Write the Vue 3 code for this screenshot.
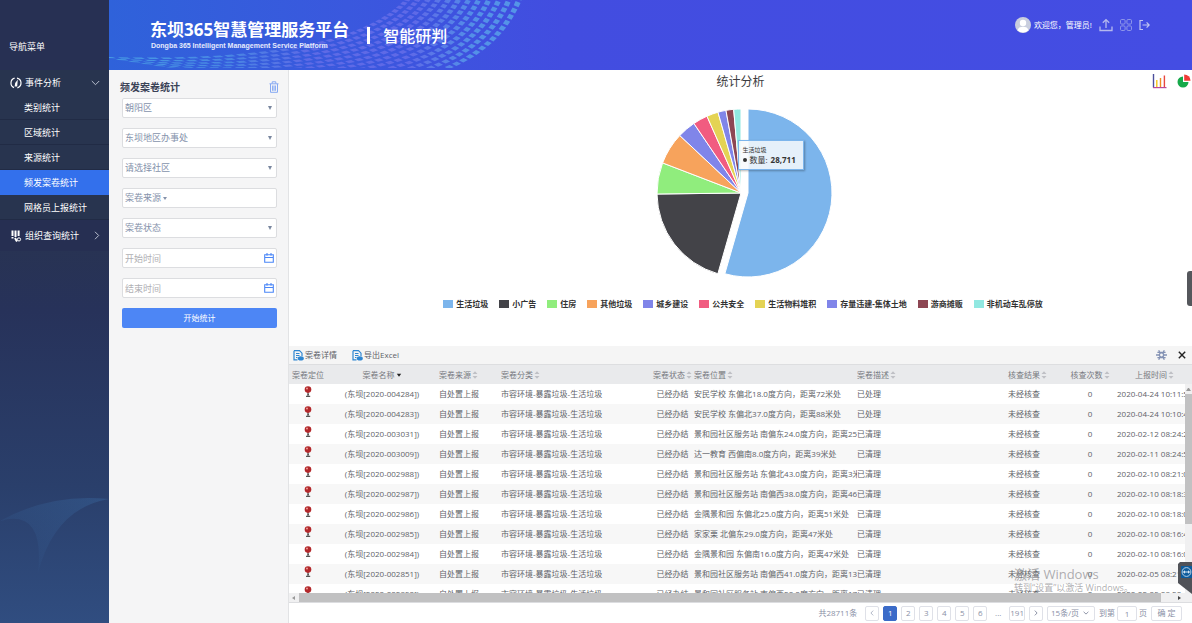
<script setup>
import { ref } from 'vue'

const subMenu = ['类别统计', '区域统计', '来源统计', '频发案卷统计', '网格员上报统计']
const activeMenu = ref('频发案卷统计')

const colors = {
  blue: '#7cb5ec', black: '#434348', green: '#90ed7d', orange: '#f7a35c', violet: '#8085e9',
  pink: '#f15c80', yellow: '#e4d354', maroon: '#8d4653', teal: '#91e8e1'
}
const series = [
  { name: '生活垃圾', color: colors.blue, from: 0, to: 196 },
  { name: '小广告', color: colors.black, from: 196, to: 269.3 },
  { name: '住房', color: colors.green, from: 269.3, to: 291 },
  { name: '其他垃圾', color: colors.orange, from: 291, to: 313.2 },
  { name: '城乡建设', color: colors.violet, from: 313.2, to: 325.9 },
  { name: '公共安全', color: colors.pink, from: 325.9, to: 336.1 },
  { name: '生活物料堆积', color: colors.yellow, from: 336.1, to: 344.1 },
  { name: '存量违建-集体土地', color: colors.violet, from: 344.1, to: 349.7 },
  { name: '游商摊贩', color: colors.maroon, from: 349.7, to: 355 },
  { name: '非机动车乱停放', color: colors.teal, from: 355, to: 360 }
]
function slice(s, i) {
  const r = 84
  const cx = i === 0 ? 94 : 87
  const cy = 86
  const pt = (a) => {
    const t = (a * Math.PI) / 180
    return `${(cx + r * Math.sin(t)).toFixed(2)} ${(cy - r * Math.cos(t)).toFixed(2)}`
  }
  return `M${cx} ${cy}L${pt(s.from)}A${r} ${r} 0 ${s.to - s.from > 180 ? 1 : 0} 1 ${pt(s.to)}Z`
}

// Folded sheet of small tiles behind the header title.
function sheet(u, v) {
  const a = (1 - u) * (1 - u)
  const b = 2 * u * (1 - u)
  const c = u * u
  const x = a * (-6 + 150 * v) + b * (250 + 130 * v) + c * (302 + 118 * v)
  const y = a * (57 + 24 * v) + b * (64 + 50 * v) + c * -8
  return `${x.toFixed(1)} ${y.toFixed(1)}`
}
function buildTiles() {
  const nu = 34
  const nv = 12
  let d = ''
  for (let i = 0; i < nu; i++) {
    for (let j = 0; j < nv; j++) {
      const u = i / nu
      const v = j / nv
      const w = 0.66 / nu
      const h = 0.56 / nv
      const k = 0.25 / nu
      d += `M${sheet(u, v)}L${sheet(u + w, v)}L${sheet(u + w - k, v + h)}L${sheet(u - k, v + h)}Z`
    }
  }
  return d
}
const tiles = buildTiles()

const columns = [
  { title: '案卷定位', cls: 'c-pin' },
  { title: '案卷名称', cls: 'c-name', sort: 'down' },
  { title: '案卷来源', cls: 'c-src', sort: 'both' },
  { title: '案卷分类', cls: 'c-type', sort: 'both' },
  { title: '案卷状态', cls: 'c-state', sort: 'both' },
  { title: '案卷位置', cls: 'c-loc', sort: 'both' },
  { title: '案卷描述', cls: 'c-desc', sort: 'both' },
  { title: '核查结果', cls: 'c-res', sort: 'both' },
  { title: '核查次数', cls: 'c-count', sort: 'both' },
  { title: '上报时间', cls: 'c-time', sort: 'both' }
]
const rows = [
  ['004284', '安民学校 东偏北18.0度方向，距离72米处', '已处理', '2020-04-24 10:11:5'],
  ['004283', '安民学校 东偏北37.0度方向，距离88米处', '已处理', '2020-04-24 10:10:4'],
  ['003031', '景和园社区服务站 南偏东24.0度方向，距离25', '已清理', '2020-02-12 08:24:2'],
  ['003009', '达一教育 西偏南8.0度方向，距离39米处', '已清理', '2020-02-11 08:24:5'],
  ['002988', '景和园社区服务站 东偏北43.0度方向，距离3米', '已清理', '2020-02-10 08:21:0'],
  ['002987', '景和园社区服务站 南偏西38.0度方向，距离46', '已清理', '2020-02-10 08:18:3'],
  ['002986', '金隅景和园 东偏北25.0度方向，距离51米处', '已清理', '2020-02-10 08:18:0'],
  ['002985', '家家栗 北偏东29.0度方向，距离47米处', '已清理', '2020-02-10 08:16:4'],
  ['002984', '金隅景和园 东偏南16.0度方向，距离47米处', '已清理', '2020-02-10 08:16:0'],
  ['002851', '景和园社区服务站 南偏西41.0度方向，距离13', '已清理', '2020-02-05 08:21:0'],
  ['002850', '景和园社区服务站 南偏西20.0度方向，距离17', '已清理', '2020-02-05 08:20:4']
]
const pages = [1, 2, 3, 4, 5, 6]
const page = ref(1)
const jump = ref('1')
const start = ref('')
const end = ref('')
</script>

<template>
  <div class="app">
    <aside class="side">
      <div class="side-title">导航菜单</div>
      <nav>
        <button class="group first">
          <svg width="12" height="12" viewBox="0 0 12 12"><g fill="none" stroke="#fff" stroke-width="1.2"><path d="M4.6 1.2A5 5 0 0 0 4 10.6M7 1.1A5 5 0 0 1 7.4 10.8" /></g><path d="M7.8 2.4L7.2 9.4H4.6L5.2 6Z" fill="#fff" /></svg>
          <span>事件分析</span>
          <svg class="chev" width="9" height="6" viewBox="0 0 9 6"><path d="M.8 1L4.5 4.7L8.2 1" fill="none" stroke="#b9bfce" /></svg>
        </button>
        <a v-for="m in subMenu" :key="m" href="#" class="sub" :class="{ on: m === activeMenu }" @click.prevent="activeMenu = m">{{ m }}</a>
        <button class="group last">
          <svg width="12" height="12" viewBox="0 0 12 12"><path d="M2.5 .5V6M5.5 .5V7M8.6 .5V6M2.5 7V8.5M5 8L7 11.5" stroke="#fff" stroke-width="2" fill="none" /><circle cx="9" cy="9.4" r="1.6" fill="none" stroke="#fff" /></svg>
          <span>组织查询统计</span>
          <svg class="chev" width="6" height="9" viewBox="0 0 6 9"><path d="M1 .8L4.7 4.5L1 8.2" fill="none" stroke="#b9bfce" /></svg>
        </button>
      </nav>
      <svg class="glow" viewBox="0 0 109 160" preserveAspectRatio="none">
        <defs><linearGradient id="gl" x1="0" y1="1" x2="1" y2="0"><stop offset="0" stop-color="#3f78b4" stop-opacity="0" /><stop offset="1" stop-color="#3f78b4" stop-opacity=".3" /></linearGradient></defs>
        <path d="M0 58Q50 30 109 36Q55 45 38 110Q45 45 0 58Z" fill="url(#gl)" />
      </svg>
    </aside>

    <div class="body">
      <header class="top">
        <svg class="wave" width="430" height="68" viewBox="0 0 430 68">
          <defs><linearGradient id="wv" gradientUnits="userSpaceOnUse" x1="0" y1="0" x2="420" y2="60">
            <stop offset="0" stop-color="#4fb4e8" /><stop offset=".3" stop-color="#4f94e6" /><stop offset=".48" stop-color="#6a70e8" /><stop offset=".72" stop-color="#6a70ea" /><stop offset=".86" stop-color="#5aa4ea" /><stop offset="1" stop-color="#5cb0ea" />
          </linearGradient></defs>
          <path :d="tiles" fill="url(#wv)" opacity=".75" />
        </svg>
        <div class="brand">
          <h1>东坝365智慧管理服务平台</h1>
          <p>Dongba 365 Intelligent Management Service Platform</p>
        </div>
        <i class="bar"></i>
        <h2>智能研判</h2>
        <div class="user">
          <svg width="16" height="16" viewBox="0 0 16 16"><circle cx="8" cy="8" r="8" fill="#c9cede" /><circle cx="8" cy="6" r="3.2" fill="#fff" /><path d="M2.5 13.2Q3.5 9.8 8 9.8T13.5 13.2A8 8 0 0 1 2.5 13.2Z" fill="#fff" /></svg>
          <span>欢迎您，管理员!</span>
          <button aria-label="上传"><svg width="14" height="14" viewBox="0 0 14 14"><path d="M1 8.5V12.5H13V8.5M7 10V2M3.8 4.8L7 1.6L10.2 4.8" fill="none" stroke="#b4b8ee" stroke-width="1.3" /></svg></button>
          <button aria-label="应用"><svg width="12" height="12" viewBox="0 0 12 12"><g fill="none" stroke="#8f97ea"><rect x=".5" y=".5" width="4.6" height="4.6" rx="1.2" /><rect x="6.9" y=".5" width="4.6" height="4.6" rx="1.2" /><rect x=".5" y="6.9" width="4.6" height="4.6" rx="1.2" /><rect x="6.9" y="6.9" width="4.6" height="4.6" rx="1.2" /></g></svg></button>
          <button aria-label="退出"><svg width="11" height="12" viewBox="0 0 11 12"><path d="M4 1.5H1V10.5H4M3.5 6H10M7.6 3.4L10.2 6L7.6 8.6" fill="none" stroke="#c0c4f2" stroke-width="1.2" /></svg></button>
        </div>
      </header>

      <div class="work">
        <form class="filter" @submit.prevent>
          <div class="filter-head">
            <h3>频发案卷统计</h3>
            <button type="button" aria-label="清空"><svg width="10" height="12" viewBox="0 0 10 12"><path d="M.5 2.8H9.5M3.2 2.5V.8H6.8V2.5M1.5 3V11.3H8.5V3M3.6 4.5V9.8M5 4.5V9.8M6.4 4.5V9.8" fill="none" stroke="#86a9f3" /></svg></button>
          </div>
          <div class="field arrow"><select aria-label="区"><option>朝阳区</option></select></div>
          <div class="field arrow"><select aria-label="街道"><option>东坝地区办事处</option></select></div>
          <div class="field arrow"><select aria-label="社区"><option>请选择社区</option></select></div>
          <div class="field"><button type="button" class="drop">案卷来源<i></i></button></div>
          <div class="field arrow"><select aria-label="状态"><option>案卷状态</option></select></div>
          <div class="field date"><input v-model="start" aria-label="开始时间" placeholder="开始时间" /><svg width="10" height="10" viewBox="0 0 10 10"><path d="M.7 1.8H9.3V9.3H.7ZM.7 4.5H9.3M3 0V2.8M7 0V2.8" fill="none" stroke="#4a86f7" stroke-width="1.1" /></svg></div>
          <div class="field date"><input v-model="end" aria-label="结束时间" placeholder="结束时间" /><svg width="10" height="10" viewBox="0 0 10 10"><path d="M.7 1.8H9.3V9.3H.7ZM.7 4.5H9.3M3 0V2.8M7 0V2.8" fill="none" stroke="#4a86f7" stroke-width="1.1" /></svg></div>
          <button class="go">开始统计</button>
        </form>

        <main class="main">
          <section class="chart">
            <h3>统计分析</h3>
            <div class="switch">
              <button aria-label="柱状图"><svg width="15" height="16" viewBox="0 0 15 16"><path d="M1.5 1V14.5" stroke="#4c4f9c" stroke-width="1.4" /><path d="M1 14.6H14.5" stroke="#b94a9c" stroke-width="1.2" /><path d="M4.8 7V14" stroke="#f5c518" stroke-width="1.4" /><path d="M8.5 5V14" stroke="#f08a24" stroke-width="1.4" /><path d="M12.4 2.5V14" stroke="#e8473f" stroke-width="1.4" /></svg></button>
              <button aria-label="饼图"><svg width="14" height="14" viewBox="0 0 14 14"><path d="M6 2.5A5.5 5.5 0 1 0 11.5 8H6Z" fill="#17a94a" /><path d="M7.2 .4A6.4 6.4 0 0 1 13.6 6.8H7.2Z" fill="#f03b36" /></svg></button>
            </div>
            <div class="pie">
              <svg width="180" height="172" viewBox="0 0 180 172"><path v-for="(s, i) in series" :key="i" :d="slice(s, i)" :fill="s.color" stroke="#fff" stroke-width="1" stroke-linejoin="round" /></svg>
              <div class="tip">
                <div class="tip-name">生活垃圾</div>
                <div class="tip-val"><i></i>数量: <b>28,711</b></div>
              </div>
            </div>
            <ul class="legend">
              <li v-for="(s, i) in series" :key="i"><svg width="10" height="8"><rect width="10" height="8" :fill="s.color" /></svg>{{ s.name }}</li>
            </ul>
          </section>

          <section class="list">
            <div class="tools">
              <button v-for="t in ['案卷详情', '导出Excel']" :key="t">
                <svg width="11" height="11" viewBox="0 0 11 11"><path d="M1 .7H6.5L9 3.2V6M1 .7V9.8H4.5M3 3.5H6.5M3 5.5H6.5M3 7.5H4.5" fill="none" stroke="#2e86d1" stroke-width="1.2" /><ellipse cx="7.8" cy="8.4" rx="3" ry="2.1" fill="#2e86d1" /></svg>{{ t }}
              </button>
              <span class="grow"></span>
              <button aria-label="设置"><svg width="11" height="10" viewBox="0 0 11 10"><path d="M2.7 .3L4.4 3.5M8.3 .3L6.6 3.5M2.7 9.7L4.4 6.5M8.3 9.7L6.6 6.5M0 5H3.5M7.5 5H11M1.4 2.4H9.6M1.4 7.6H9.6" stroke="#8492b4" stroke-width="1.3" /><circle cx="5.5" cy="5" r="2.1" fill="#f5f5f5" stroke="#8492b4" stroke-width="1.3" /></svg></button>
              <button class="close" aria-label="关闭"><svg width="8" height="8" viewBox="0 0 8 8"><path d="M.8 .8L7.2 7.2M7.2 .8L.8 7.2" stroke="#222" stroke-width="1.4" /></svg></button>
            </div>
            <div class="grid">
              <table>
                <thead>
                  <tr>
                    <th v-for="c in columns" :key="c.title" :class="c.cls">{{ c.title }}<svg v-if="c.sort === 'both'" width="6" height="8" viewBox="0 0 6 8"><path d="M.5 3L3 .3L5.5 3ZM.5 5L3 7.7L5.5 5Z" fill="#bfc0c5" /></svg><svg v-else-if="c.sort" width="6" height="8" viewBox="0 0 6 8"><path d="M.8 2.8H5.2L3 5.8Z" fill="#222" /></svg></th>
                  </tr>
                </thead>
                <tbody>
                  <tr v-for="r in rows" :key="r[0]">
                    <td class="c-pin"><svg width="8" height="12" viewBox="0 0 8 12"><path d="M4 6V10M2 10.4H6.2M3.2 8.3H5" stroke="#555" stroke-width="1.2" /><circle cx="4" cy="3.6" r="3.3" fill="#b3282b" /><circle cx="3" cy="2.6" r="1" fill="#eb9b96" /></svg></td>
                    <td class="c-name">(东坝[2020-{{ r[0] }}])</td>
                    <td class="c-src">自处置上报</td>
                    <td class="c-type">市容环境-暴露垃圾-生活垃圾</td>
                    <td class="c-state">已经办结</td>
                    <td class="c-loc">{{ r[1] }}</td>
                    <td class="c-desc">{{ r[2] }}</td>
                    <td class="c-res">未经核查</td>
                    <td class="c-count">0</td>
                    <td class="c-time">{{ r[3] }}</td>
                  </tr>
                </tbody>
              </table>
              <div class="vbar"><i></i><span></span></div>
            </div>
            <div class="hbar"><i class="l"></i><span></span><i class="r"></i></div>
            <div class="pager">
              <span class="total">共28711条</span>
              <button aria-label="上一页"><svg width="4" height="6" viewBox="0 0 4 6"><path d="M3.2 .6L.9 3L3.2 5.4" fill="none" stroke="#b3b8c8" /></svg></button>
              <button v-for="p in pages" :key="p" :class="{ on: p === page }" @click="page = p">{{ p }}</button>
              <span class="dots">...</span>
              <button>191</button>
              <button aria-label="下一页"><svg width="4" height="6" viewBox="0 0 4 6"><path d="M.8 .6L3.1 3L.8 5.4" fill="none" stroke="#8f95a8" /></svg></button>
              <div class="size"><select aria-label="每页条数"><option>15条/页</option></select><svg width="6" height="4" viewBox="0 0 6 4"><path d="M.6 .8L3 3.1L5.4 .8" fill="none" stroke="#8f95a8" /></svg></div>
              <label for="jump">到第</label><input id="jump" v-model="jump" /><span>页</span>
              <button class="ok">确 定</button>
            </div>
            <div class="mark"><p>激活 Windows</p><p class="small">转到“设置”以激活 Windows。</p></div>
          </section>
        </main>
      </div>
    </div>
    <div class="handle"></div>
    <div class="remote"><svg width="11" height="12" viewBox="0 0 11 12"><rect width="11" height="12" fill="#0d5b9c" /><circle cx="5.5" cy="6" r="4.4" fill="none" stroke="#b9d2e6" /><path d="M1.8 6L4 4.2V5.4H7V4.2L9.2 6L7 7.8V6.6H4V7.8Z" fill="#d8e6f2" /></svg></div>
  </div>
</template>

<style>
body { margin: 0; overflow: hidden; }
</style>

<style scoped>
* { box-sizing: border-box; }
.app {
  position: relative; display: flex; height: 100vh; overflow: hidden;
  font-family: "Open Sans", "Noto Sans CJK SC", sans-serif; font-size: 8px; line-height: 12px; color: #606268;
}
button, input, select { font: inherit; color: inherit; margin: 0; padding: 0; border: 0; background: none; }
h1, h2, h3, p, ul { margin: 0; padding: 0; list-style: none; }
svg { display: block; flex: none; }

.side {
  position: relative; flex: 0 0 109px; color: #fff; font-size: 9px;
  background: linear-gradient(180deg, #273152 0, #283352 38%, #27325a 50%, #2a3f6b 78%, #304d80 100%);
}
.side-title { height: 70px; padding: 41px 0 0 9px; background: #273053; }
.group { display: flex; align-items: center; width: 100%; height: 25px; padding: 0 9px 0 10px; gap: 3px; text-align: left; background: #28344f; }
.group span { flex: 1; }
.group.last { height: 31px; background: #262f52; }
.sub { display: block; height: 25px; padding: 6px 0 0 24px; line-height: 14px; color: #fff; text-decoration: none; background: #28344f; border-bottom: 1px solid #212b45; }
.sub.on { background: #3370ec; border-color: #3370ec; }
.glow { position: absolute; left: 0; bottom: 0; width: 100%; height: 160px; }

.body { flex: 1; min-width: 0; display: flex; flex-direction: column; }
.top {
  position: relative; flex: 0 0 70px; display: flex; align-items: flex-start; color: #fff; padding-left: 41px;
  background: linear-gradient(90deg, #2f62da 0, #3a58de 22%, #424de0 42%, #444de3 100%);
}
.wave { position: absolute; left: 0; top: 0; }
.brand, .bar, h2, .user { position: relative; }
.brand { padding-top: 18px; }
h1 { font-size: 17px; line-height: 23px; font-weight: 700; white-space: nowrap; }
.brand p { font: 700 7px/9px "Liberation Sans", Arial, sans-serif; padding-left: 1px; color: #e6eafc; white-space: nowrap; }
.bar { width: 3px; height: 17px; margin: 27px 13px 0 18px; background: #fff; }
h2 { padding-top: 24px; font-size: 16px; line-height: 24px; font-weight: 500; white-space: nowrap; }
.user { display: flex; align-items: center; gap: 7px; margin: 16px 42px 0 auto; height: 17px; }
.user span { margin-left: -4px; white-space: nowrap; }

.work { flex: 1; min-height: 0; display: flex; }
.filter { flex: 0 0 180px; padding: 8px 11px 0 13px; display: flex; flex-direction: column; gap: 10px; background: #f5f5f6; border-right: 1px solid #e2e3e5; font-size: 9px; color: #8592ab; }
.filter-head { display: flex; justify-content: space-between; align-items: center; height: 17px; margin: 0 -2px -7px -2px; }
.filter-head h3 { font-size: 10px; font-weight: 700; color: #3a4256; }
.field { position: relative; height: 20px; background: #fff; border: 1px solid #dcdde0; border-radius: 2px; display: flex; align-items: center; }
.field select, .field input { appearance: none; width: 100%; height: 18px; padding: 0 2px; outline: 0; }
.field.arrow::after { content: ""; position: absolute; right: 4px; top: 7px; border: 2px solid transparent; border-top: 4px solid #7a879f; border-bottom: 0; }
.drop { display: flex; align-items: center; gap: 2px; padding: 0 2px; }
.drop i { border: 2px solid transparent; border-top: 3px solid #8592ab; border-bottom: 0; }
.date svg { margin-right: 2px; }
.field input::placeholder { color: #b0b0b4; opacity: 1; }
.go { height: 20px; border-radius: 2px; background: #4d86f5; color: #fff; font-size: 8px; }

.main { flex: 1; min-width: 0; display: flex; flex-direction: column; background: #fff; }
.chart { position: relative; flex: 0 0 276px; display: flex; flex-direction: column; align-items: center; }
.chart h3 { margin-top: 3px; font-size: 12px; line-height: 18px; font-weight: 400; color: #3c3c40; }
.switch { position: absolute; right: 1px; top: 3px; display: flex; align-items: center; gap: 10px; }
.pie { position: relative; margin: 16px 0 0 6px; }
.tip { position: absolute; left: 84px; top: 33px; width: 66px; height: 30px; padding: 5px 0 0 4px; color: #333; background: rgba(247, 249, 251, .86); border: 1px solid #7cb5ec; box-shadow: 1px 1px 2px rgba(0, 0, 0, .3); white-space: nowrap; }
.tip-name { font-size: 6px; line-height: 9px; }
.tip-val { display: flex; align-items: center; gap: 3px; line-height: 10px; }
.tip-val i { width: 4px; height: 4px; border-radius: 50%; background: #333; }
.legend { display: flex; gap: 11px; margin: 19px 0 0 5px; }
.legend li { display: flex; align-items: center; gap: 3px; font-weight: 700; color: #333; white-space: nowrap; line-height: 12px; }

.list { position: relative; flex: 1; min-height: 0; display: flex; flex-direction: column; }
.tools { flex: 0 0 19px; display: flex; align-items: center; gap: 15px; padding: 0 6px 0 4px; background: #f5f5f5; border-bottom: 1px solid #dddee0; }
.tools button { display: flex; align-items: center; gap: 1px; }
.tools .close { margin-left: -4px; }
.grow { flex: 1; }
.grid { position: relative; flex: 1; min-height: 0; overflow: hidden; }
table { width: 100%; table-layout: fixed; border-collapse: collapse; }
th { height: 19px; background: #e9eaec; font-weight: 400; color: #77797f; }
td { height: 20px; }
th, td { padding: 0 0 0 2px; line-height: 14px; text-align: left; white-space: nowrap; overflow: hidden; }
th svg { display: inline-block; vertical-align: middle; margin-left: 1px; }
tbody tr:nth-child(even) { background: #f7f7f7; }
.c-pin { width: 36px; text-align: center; }
td.c-pin { vertical-align: top; }
td.c-pin svg { margin: 2px auto 0; }
.c-name { width: 112px; text-align: center; }
.c-src { width: 62px; }
.c-type { width: 152px; }
.c-state { width: 43px; text-align: center; padding: 0; }
.c-loc { width: 163px; padding: 0; }
.c-desc { padding: 0; }
.c-res { width: 56px; }
.c-count { width: 54px; text-align: center; }
.c-time { width: 76px; padding-left: 1px; }
th.c-time { text-align: center; }
.vbar { position: absolute; right: 0; top: 19px; bottom: 0; width: 7px; background: #f0f0f1; }
.vbar i { display: block; margin: 4px 1px 3px 1px; border: 2px solid transparent; border-bottom: 3px solid #999; border-top: 0; }
.vbar span { display: block; height: 130px; background: #c1c1c2; }
.hbar { flex: 0 0 10px; display: flex; align-items: center; background: #f0f0f1; border-bottom: 1px solid #dcdde0; }
.hbar span { flex: 1; height: 9px; background: #c1c1c2; }
.hbar i { border: 2px solid transparent; }
.hbar .l { border-right: 3px solid #999; border-left: 0; margin: 0 4px 0 3px; }
.hbar .r { border-left: 3px solid #444; border-right: 0; margin: 0 11px 0 17px; }
.pager { flex: 0 0 20px; display: flex; align-items: center; justify-content: flex-end; gap: 4px; padding-right: 10px; color: #8a90a6; white-space: nowrap; }
.pager button, .pager input, .size { min-width: 14px; height: 15px; display: flex; align-items: center; justify-content: center; background: #fff; border: 1px solid #dfe1e8; border-radius: 2px; }
.pager button.on { background: #3b6bc8; border-color: #3b6bc8; color: #fff; }
.total { margin-right: 4px; }
.dots { width: 14px; text-align: center; }
.pager .size { width: 48px; padding: 0 5px 0 3px; }
.size select { flex: 1; min-width: 0; appearance: none; }
.pager input { width: 20px; text-align: center; }
.pager label { margin-right: -2px; }
.pager input + span { margin-left: -2px; }
.pager button.ok { width: 31px; }
.mark { position: absolute; right: 60px; bottom: 29px; width: 118px; color: rgba(130, 130, 134, .65); white-space: nowrap; pointer-events: none; }
.mark p { font-size: 13px; line-height: 16px; }
.mark .small { font-size: 9px; line-height: 12px; }

.handle { position: absolute; right: 0; top: 271px; width: 5px; height: 35px; background: #55575c; border-radius: 3px 0 0 3px; }
.remote { position: absolute; right: 0; top: 562px; width: 14px; height: 32px; padding: 4px 0 0 3px; background: #505258; clip-path: polygon(2px 0, 100% 0, 100% 100%, 0 66%, 0 2px); }
</style>
